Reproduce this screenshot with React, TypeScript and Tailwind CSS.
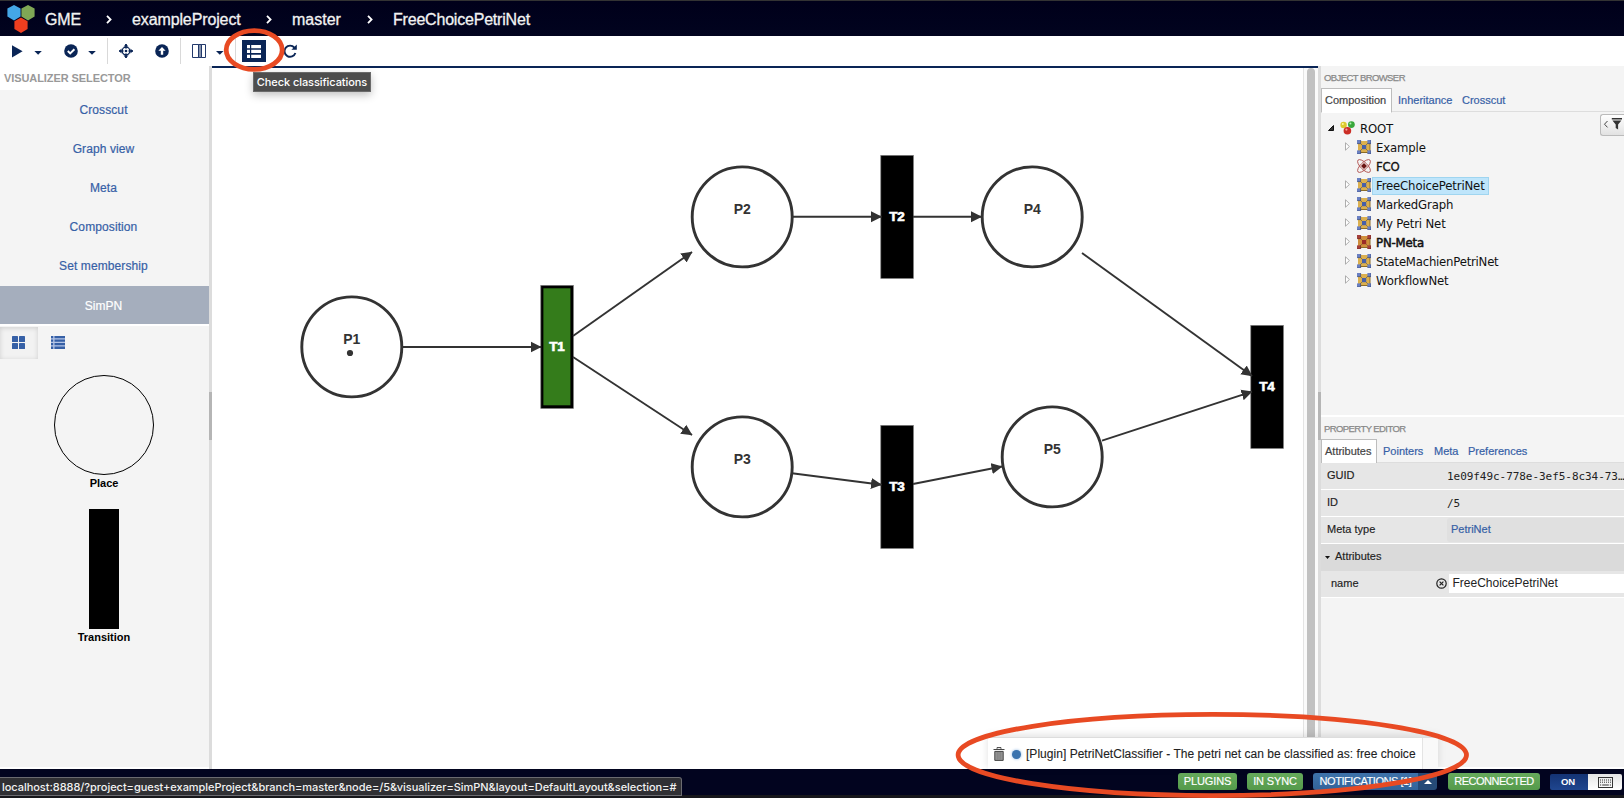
import React from "react";

const edges: [number, number, number, number][] = [
  [402, 347, 541, 347],
  [573, 336, 692, 252],
  [573, 357, 692, 435],
  [793, 216.8, 881.5, 216.8],
  [913, 216.8, 981.5, 216.8],
  [792, 473.3, 881.5, 484.8],
  [913, 484, 1002, 466.5],
  [1082, 253, 1252, 376],
  [1102, 440.7, 1252, 391.7],
];

const places = [
  { name: "P1", x: 351.8, y: 346.9 },
  { name: "P2", x: 742.2, y: 216.9 },
  { name: "P3", x: 742.2, y: 466.9 },
  { name: "P4", x: 1032.2, y: 216.9 },
  { name: "P5", x: 1052.2, y: 456.9 },
];

const transitions = [
  { name: "T1", x: 557, y: 346.7, enabled: true },
  { name: "T2", x: 897, y: 216.7, enabled: false },
  { name: "T3", x: 897, y: 486.7, enabled: false },
  { name: "T4", x: 1267, y: 386.7, enabled: false },
];

function Diagram() {
  return (
    <svg className="block h-[701px] w-[1091px]" viewBox="212 68 1091 701" fontFamily="Liberation Sans, Arial, sans-serif" fontWeight="bold" fontSize="14" textAnchor="middle">
      <defs>
        <marker id="arrow" viewBox="0 0 11 12" refX="10.5" refY="6" markerWidth="11" markerHeight="12" markerUnits="userSpaceOnUse" orient="auto">
          <path d="M0 0.5L11 6L0 11.5Z" fill="#333" />
        </marker>
      </defs>
      {places.map((p) => (
        <g key={p.name}>
          <circle cx={p.x} cy={p.y} r="50" fill="#fff" stroke="#333" strokeWidth="2.9" />
          <text x={p.x} y={p.y - 2.9} fill="#333">{p.name}</text>
        </g>
      ))}
      <circle cx="350" cy="353" r="3.1" fill="#333" />
      {transitions.map((t) => (
        <g key={t.name}>
          <rect x={t.x - 16.2} y={t.y - 61.3} width="32.6" height="123" fill="#000" stroke="#777" strokeWidth="0.7" />
          {t.enabled && <rect x={t.x - 13.6} y={t.y - 58.4} width="27" height="117" fill="#347c1b" />}
        </g>
      ))}
      {edges.map(([a, b, c, d], i) => (
        <line key={i} x1={a} y1={b} x2={c} y2={d} stroke="#333" strokeWidth="1.9" markerEnd="url(#arrow)" />
      ))}
      {transitions.map((t) => (
        <text key={t.name} x={t.x - 0.2} y={t.y + 4.3} fill="#fff" stroke="#fff" strokeWidth="0.6" fontSize="13.5" letterSpacing="-0.3">{t.name}</text>
      ))}
    </svg>
  );
}

function Logo() {
  return (
    <svg className="h-7 w-[28px]" viewBox="0 0 28 28">
      <path d="M7 0L13.6 3.6V11.6L7 15.4L0.4 11.6V3.6Z" fill="#44a6e6" />
      <path d="M21 0L27.6 3.6V11.6L21 15.4L14.4 11.6V3.6Z" fill="#7fa755" />
      <path d="M14 12.4L20.6 16.2V24L14 28L7.4 24V16.2Z" fill="#ee3e1f" />
    </svg>
  );
}

function Crumb({ children, className }: { children: string; className: string }) {
  return <span className={`pt-[2px] whitespace-nowrap text-[16px] text-[#f2f2f2] [-webkit-text-stroke:0.3px_#f2f2f2] ${className}`}>{children}</span>;
}

function Chevron({ className }: { className: string }) {
  return (
    <svg className={`mt-[2px] h-[9px] w-[6px] ${className}`} viewBox="0 0 6 9">
      <path d="M1 0.8L4.6 4.5L1 8.2" fill="none" stroke="#fff" strokeWidth="1.8" />
    </svg>
  );
}

function Toolbar() {
  return (
    <div className="h-[30px] w-full bg-white">
      <svg className="block h-[30px] w-[310px]" viewBox="0 36 310 30" fill="#0a2556">
        <path d="M12 45.2L22.6 51.3L12 57.4Z" />
        <path d="M34.4 51H41.8L38.1 54.8Z" />
        <circle cx="71" cy="51" r="6.8" />
        <path d="M67.8 51L70.2 53.4L74.4 49.2" fill="none" stroke="#fff" strokeWidth="2" />
        <path d="M88.2 51H95.8L92 54.8Z" />
        <path d="M107.5 38V64M180.5 38V64M235.5 38V64" stroke="#d9d9d9" fill="none" />
        <g>
          <circle cx="126" cy="51" r="3.8" fill="none" stroke="#0a2556" strokeWidth="1.3" />
          <circle cx="126" cy="51" r="1.3" />
          <path d="M126 44V48.5M126 53.5V58M119 51H123.5M128.5 51H133" stroke="#0a2556" strokeWidth="1.7" />
          <path d="M123.5 46.5L126 44L128.5 46.5ZM123.5 55.5L126 58L128.5 55.5ZM121.5 48.5L119 51L121.5 53.5ZM130.5 48.5L133 51L130.5 53.5Z" />
        </g>
        <circle cx="162" cy="51" r="6.8" />
        <path d="M162 47L165.6 50.8H163.2V54.8H160.8V50.8H158.4Z" fill="#fff" />
        <rect x="198" y="45" width="4" height="12.5" fill="#8794ad" />
        <path d="M192.5 44.5H198.5V57.5H192.5ZM201.5 44.5H205.5V57.5H201.5ZM198.5 44.5H201.5V57.5H198.5Z" fill="none" stroke="#22396b" strokeWidth="1" />
        <path d="M216 51H223.6L219.8 54.8Z" />
        <rect x="242" y="40" width="24" height="22" />
        <path d="M247 45H250V48.2H247ZM251.2 45H261V48.2H251.2ZM247 49.8H250V53.1H247ZM251.2 49.8H261V53.1H251.2ZM247 54.7H250V58H247ZM251.2 54.7H261V58H251.2Z" fill="#fff" />
        <path d="M294.4 47.6A5.6 5.6 0 1 0 295.4 53" fill="none" stroke="#0a2556" strokeWidth="1.9" />
        <path d="M296.8 44.6V49.8H291.4Z" />
      </svg>
    </div>
  );
}

function VisualizerItem({ children }: { children: string }) {
  return <div className="flex h-[39px] items-center justify-center pr-[2px] text-[12px] tracking-[0.1px] text-[#3660a6] [-webkit-text-stroke:0.2px_#3660a6]">{children}</div>;
}

function Splitter() {
  return (
    <div className="h-full w-[3px] shrink-0 bg-[#dcdcdc] pt-[326px]">
      <div className="h-12 bg-[#b5b5b5]" />
    </div>
  );
}

function LeftPanel() {
  return (
    <aside className="flex h-[701px] w-[209px] shrink-0 flex-col bg-[#f4f4f4]">
      <div className="flex h-6 items-center bg-white pl-1 text-[11px] font-bold tracking-[-0.08px] text-[#999]">VISUALIZER SELECTOR</div>
      {["Crosscut", "Graph view", "Meta", "Composition", "Set membership"].map((v) => (
        <VisualizerItem key={v}>{v}</VisualizerItem>
      ))}
      <div className="mt-px flex h-[38px] items-center justify-center bg-[#a5aebd] pt-px pr-[2px] text-[12px] text-white [-webkit-text-stroke:0.2px_#fff]">SimPN</div>
      <div className="h-[2px] bg-white" />
      <div className="mt-px flex h-8">
        <div className="flex h-8 w-[38px] items-center justify-center bg-[#f2f2f2] pr-[2px] pb-px shadow-[inset_0_1px_5px_rgba(0,0,0,0.15)]">
          <svg className="h-[13px] w-[13px]" viewBox="0 0 13 13" fill="#3660a6">
            <rect width="6" height="6" rx="0.6" /><rect x="7" width="6" height="6" rx="0.6" />
            <rect y="7" width="6" height="6" rx="0.6" /><rect x="7" y="7" width="6" height="6" rx="0.6" />
          </svg>
        </div>
        <svg className="mt-[9px] ml-[13px] h-[13px] w-[14px]" viewBox="0 0 14 13" fill="#3660a6">
          <rect width="14" height="13" fill="#b5c5e6" />
          <path d="M0 0H2.2V2.3H0ZM3.5 0H14V2.3H3.5ZM0 3.6H2.2V5.7H0ZM3.5 3.6H14V5.7H3.5ZM0 7.1H2.2V9.2H0ZM3.5 7.1H14V9.2H3.5ZM0 10.6H2.2V13H0ZM3.5 10.6H14V13H3.5Z" />
        </svg>
      </div>
      <div className="mt-[16px] flex flex-col items-center pr-px text-[11px] leading-[16px] font-bold text-black">
        <div className="h-[100px] w-[100px] rounded-full border border-black" />
        <div>Place</div>
        <div className="mt-[18px] h-[120px] w-[30px] bg-black" />
        <div>Transition</div>
      </div>
    </aside>
  );
}

function PanelTitle({ children }: { children: string }) {
  return <div className="flex h-[22px] shrink-0 items-center pt-[2px] pl-[3px] text-[9.5px] tracking-[-0.58px] text-[#888] [-webkit-text-stroke:0.25px_#888]">{children}</div>;
}

function Tab({ children, className, active }: { children: string; className: string; active?: boolean }) {
  return (
    <div className={`flex h-[25px] items-center whitespace-nowrap border text-[11px] ${active ? "border-[#bdbdbd] border-b-white bg-white text-[#444]" : "border-transparent text-[#3660a6]"} [-webkit-text-stroke:0.2px] ${className}`}>
      {children}
    </div>
  );
}

function ModelIcon({ meta }: { meta?: boolean }) {
  const c = meta ? "#a5403c" : "#6a80c2";
  return (
    <svg className="-mt-px h-[14px] w-[14px] shrink-0" viewBox="0 0 14 14">
      <rect x="1" y="1" width="12" height="12" fill={meta ? "#d08f3c" : "#dcb04e"} />
      <path d="M1 12.5H13V3" fill="none" stroke="#8c6c28" />
      <path d="M2 2L12 12M12 2L2 12" stroke="#8c7238" strokeWidth="0.9" />
      <rect x="0" y="0" width="3.6" height="3.6" fill={c} /><rect x="10.4" y="0" width="3.6" height="3.6" fill={c} />
      <rect x="0" y="10.4" width="3.6" height="3.6" fill={c} /><rect x="10.4" y="10.4" width="3.6" height="3.6" fill={c} />
      <path d="M0 3.6H3.6V0M10.4 3.6H14V0M0 14H3.6V10.4M10.4 14H14V10.4" fill="none" stroke={meta ? "#6b1c1a" : "#34477f"} strokeWidth="0.7" />
      <rect x="5" y="5" width="4.2" height="4.2" fill={meta ? "#9b2c27" : "#4760a8"} />
    </svg>
  );
}

function FcoIcon() {
  return (
    <svg className="-mt-px h-[14px] w-[14px] shrink-0" viewBox="0 0 14 14">
      <g fill="none" stroke="#b0504e" strokeWidth="0.9">
        <ellipse cx="7" cy="7" rx="8.4" ry="3.4" transform="rotate(45 7 7)" />
        <ellipse cx="7" cy="7" rx="8.4" ry="3.4" transform="rotate(-45 7 7)" />
      </g>
      <path d="M7 4L10 7L7 10L4 7Z" fill="#6d1715" />
    </svg>
  );
}

const nodes = ["Example", "FCO", "FreeChoicePetriNet", "MarkedGraph", "My Petri Net", "PN-Meta", "StateMachienPetriNet", "WorkflowNet"];

function Tree() {
  return (
    <div className="flex grow pt-[7px] font-['DejaVu_Sans_Condensed','DejaVu_Sans','Noto_Sans',sans-serif] text-[13px] text-[#111] [font-stretch:condensed]">
      <div className="w-[279px]">
        <div className="flex h-[19px] items-center pl-[7px]">
          <svg className="-mt-[2px] h-[6px] w-[6px]" viewBox="0 0 6 6"><path d="M5.5 0.5V5.5H0.5Z" fill="#333" stroke="#111" /></svg>
          <svg className="-mt-[2px] ml-[6px] h-[14px] w-[15px]" viewBox="0 0 15 14">
            <circle cx="3.6" cy="4" r="3.2" fill="#dccb2e" /><circle cx="11.4" cy="3.6" r="3.4" fill="#3aa83c" /><circle cx="7.4" cy="9.8" r="3.8" fill="#cb2d25" />
            <circle cx="2.8" cy="3" r="1" fill="#fff8a8" /><circle cx="10.4" cy="2.6" r="1" fill="#b3efb3" /><circle cx="6.4" cy="8.6" r="1.1" fill="#f5a59f" />
          </svg>
          <span className="ml-[5px] tracking-[-0.2px]">ROOT</span>
        </div>
        {nodes.map((n) => (
          <div key={n} className="flex h-[19px] items-center pl-6">
            <svg className="-mt-[2px] mr-[7px] h-[9px] w-[5px] shrink-0" viewBox="0 0 5 9">
              {n !== "FCO" && <path d="M0.5 0.8L4.4 4.5L0.5 8.2Z" fill="#fff" stroke="#999" strokeWidth="0.8" />}
            </svg>
            {n === "FCO" ? <FcoIcon /> : <ModelIcon meta={n === "PN-Meta"} />}
            <span
              className={`ml-px flex h-[18px] items-center border px-[3px] whitespace-nowrap ${n === "StateMachienPetriNet" ? "tracking-[-0.22px]" : "tracking-[-0.15px]"} ${n === "FreeChoicePetriNet" ? "border-[#9fd5f0] bg-[#bee5fb]" : "border-transparent"} ${n === "PN-Meta" ? "[-webkit-text-stroke:0.5px_#111]" : n === "FCO" ? "[-webkit-text-stroke:0.3px_#111]" : ""}`}
            >
              {n}
            </span>
          </div>
        ))}
      </div>
      <div className="-mt-[5px] flex h-[22px] w-6 items-center rounded-l-[3px] border border-r-0 border-[#bbb] bg-linear-to-b from-white to-[#e2e2e2] pb-[2px]">
        <svg className="h-[14px] w-[22px]" viewBox="0 0 22 14">
          <path d="M6.5 4L3.5 7.2L6.5 10.4" fill="none" stroke="#444" />
          <path d="M10.8 1H21V2.4H10.8ZM11.4 3.4H20.4L17.1 7.6V12.6L14.7 11V7.6Z" fill="#333" />
        </svg>
      </div>
    </div>
  );
}

function Row({ label, children }: { label: string; children: React.ReactNode }) {
  return (
    <div className="flex h-[27px] items-center border-b border-white bg-[#e6e6e6] text-[11px] text-[#222]">
      <div className="w-[126px] shrink-0 pb-px pl-[6px] [-webkit-text-stroke:0.15px]">{label}</div>
      {children}
    </div>
  );
}

function RightPanel() {
  return (
    <aside className="flex h-[701px] w-[303px] shrink-0 flex-col overflow-hidden bg-[#f4f4f4]">
      <div className="flex h-[349px] flex-col">
        <PanelTitle>OBJECT BROWSER</PanelTitle>
        <div className="flex h-6 border-b border-[#ddd]">
          <Tab active className="w-[71px] pl-[3px]">Composition</Tab>
          <Tab className="w-[64px] pl-[5px]">Inheritance</Tab>
          <Tab className="pl-[5px]">Crosscut</Tab>
        </div>
        <Tree />
      </div>
      <div className="h-[2px] shrink-0 bg-white" />
      <PanelTitle>PROPERTY EDITOR</PanelTitle>
      <div className="flex h-6 border-b border-[#ddd]">
        <Tab active className="w-[56px] pl-[3px]">Attributes</Tab>
        <Tab className="w-[51px] pl-[5px]">Pointers</Tab>
        <Tab className="w-[35px] pl-[5px]">Meta</Tab>
        <Tab className="pl-1">Preferences</Tab>
      </div>
      <Row label="GUID"><span className="pt-[2px] font-['DejaVu_Sans_Mono',monospace] text-[11px] tracking-[-0.05px] whitespace-nowrap">1e09f49c-778e-3ef5-8c34-73…</span></Row>
      <Row label="ID"><span className="pt-[2px] font-['DejaVu_Sans_Mono',monospace] text-[11px]">/5</span></Row>
      <Row label="Meta type"><span className="flex h-6 grow items-center rounded-l-[3px] bg-[#e0e0e0] pb-px pl-1 text-[#3660a6] [-webkit-text-stroke:0.2px]">PetriNet</span></Row>
      <div className="flex h-[27px] items-center bg-[#dadada] pb-[2px] pl-1 text-[11px] text-[#222] [-webkit-text-stroke:0.15px]">
        <svg className="mt-[2px] h-[3px] w-[5px]" viewBox="0 0 5 3"><path d="M0 0H5L2.5 3Z" fill="#111" /></svg>
        <span className="ml-[5px]">Attributes</span>
      </div>
      <div className="flex h-[27px] items-center border-b border-white bg-[#e6e6e6] pb-px text-[11px] text-[#222]">
        <span className="w-[115px] pl-[10px] [-webkit-text-stroke:0.15px]">name</span>
        <svg className="-mt-px h-[11px] w-[11px]" viewBox="0 0 11 11" fill="none" stroke="#222">
          <circle cx="5.5" cy="5.5" r="4.7" strokeWidth="1.2" /><path d="M3.6 3.6L7.4 7.4M7.4 3.6L3.6 7.4" strokeWidth="1.2" />
        </svg>
        <span className="ml-[2px] flex h-[19px] grow items-center bg-white pb-px pl-[3.5px] text-[12px]">FreeChoicePetriNet</span>
      </div>
    </aside>
  );
}

function Badge({ children, className }: { children: string; className: string }) {
  return <div className={`flex h-[17px] items-center justify-center rounded-[3px] text-[11px] whitespace-nowrap text-white [-webkit-text-stroke:0.15px_#fff] ${className}`}>{children}</div>;
}

export default function App() {
  return (
    <div className="relative flex h-[798px] w-[1624px] flex-col overflow-hidden bg-white font-['Liberation_Sans',Arial,sans-serif]">
      <header className="flex h-9 items-center border-t border-[#333] bg-linear-to-b from-[#00001a] to-[#02041f] pl-[7px]">
        <Logo />
        <Crumb className="ml-[10px] w-[61px] tracking-[-0.1px]">GME</Crumb>
        <Chevron className="mr-[20px]" />
        <Crumb className="w-[134px] tracking-[-0.12px]">exampleProject</Crumb>
        <Chevron className="mr-[20px]" />
        <Crumb className="w-[75px]">master</Crumb>
        <Chevron className="mr-[20px]" />
        <Crumb className="tracking-[-0.2px]">FreeChoicePetriNet</Crumb>
      </header>
      <Toolbar />
      <div className="flex h-[703px]">
        <LeftPanel />
        <Splitter />
        <main className="h-[703px] w-[1106px] border-t-2 border-[#0a2556]">
          <div className="flex h-[701px]">
            <Diagram />
            <div className="w-[4px] border-l border-[#e4e4e4] bg-[#fafafa]" />
            <div className="w-[8px] rounded-t bg-[#c1c1c1]" />
            <div className="w-[3px] bg-[#fafafa]" />
          </div>
        </main>
        <Splitter />
        <RightPanel />
      </div>
      <footer className="flex h-[26px] items-center justify-end bg-[#02041f] pr-[2px] pb-px">
        <Badge className="w-[59px] bg-linear-to-b from-[#66aa5c] to-[#559a4b] tracking-[-0.1px]">PLUGINS</Badge>
        <Badge className="ml-[10px] w-[56px] bg-linear-to-b from-[#66aa5c] to-[#559a4b] tracking-[-0.15px]">IN SYNC</Badge>
        <Badge className="ml-[10px] w-[105px] rounded-r-none bg-linear-to-b from-[#3f73ab] to-[#32639a] tracking-[-0.45px]">NOTIFICATIONS [1]</Badge>
        <div className="flex h-[17px] w-[19px] items-center justify-center rounded-r-[3px] bg-[#264a77]">
          <svg className="h-1 w-2" viewBox="0 0 8 4"><path d="M0 4L4 0L8 4Z" fill="#fff" /></svg>
        </div>
        <Badge className="ml-[11px] w-[92px] bg-linear-to-b from-[#66aa5c] to-[#559a4b] tracking-[-0.5px]">RECONNECTED</Badge>
        <div className="mt-px ml-[10px] flex h-4 w-[38px] items-center justify-center rounded-l-[2px] bg-linear-to-b from-[#143374] to-[#1f468f] pr-[2px] text-[9.5px] font-bold text-white">ON</div>
        <div className="mt-px flex h-4 w-[34px] items-center justify-center rounded-r-[2px] bg-linear-to-b from-[#e4e4e4] to-white">
          <svg className="h-[11px] w-[15px]" viewBox="0 0 15 11" fill="none" stroke="#333">
            <rect x="0.5" y="0.5" width="14" height="10" /><path d="M2 3H13M2 5.2H13" strokeDasharray="1 1" /><path d="M2 8H3.2M4.2 8H10.8M11.8 8H13" />
          </svg>
        </div>
      </footer>
      <div className="h-[3px] bg-[#17171b]" />

      <div className="absolute top-[72px] left-[253px] flex h-5 w-[118px] items-center justify-center border border-[#6a6a6a] bg-[#4d4d4d] font-[Inter,sans-serif] text-[11px] font-medium tracking-[-0.07px] whitespace-nowrap text-white shadow-[0_3px_8px_rgba(0,0,0,0.25)]">Check classifications</div>

      <div className="absolute top-[737px] left-[988px] flex h-8 w-[450px] items-center border-t border-[#ddd] bg-[#f9f9f9] shadow-[0_-2px_8px_rgba(0,0,0,0.12)]">
        <div className="flex h-full w-[435px] items-center border-r border-[#e4e4e4] bg-white pl-[5px]">
          <svg className="h-[14px] w-[12px]" viewBox="0 0 12 14" fill="none" stroke="#444">
            <path d="M4 1.8V0.6H8V1.8M0.5 2.5H11.5" /><path d="M1.8 4.4V13.4H10.2V4.4Z" fill="#999" /><path d="M4.2 5V12.6M6 5V12.6M7.8 5V12.6" stroke="#777" strokeWidth="0.8" />
          </svg>
          <div className="mt-[2px] ml-[7px] h-[9px] w-[9px] rounded-full bg-[#3b73ae] shadow-[0_0_3px_#8ab4e0]" />
          <span className="ml-[5px] text-[12px] tracking-[0.03px] whitespace-nowrap text-[#222] [-webkit-text-stroke:0.1px]">[Plugin] PetriNetClassifier - The petri net can be classified as: free choice</span>
        </div>
      </div>

      <div className="absolute top-[777px] left-0 flex h-[19px] w-[682px] items-center rounded-tr-[3px] border border-l-0 border-[#6b6b70] bg-[#303034] pt-px pl-[2px] font-[Inter,sans-serif] text-[11px] font-medium tracking-[-0.04px] whitespace-nowrap text-[#f2f2f2]">
        localhost:8888/?project=guest+exampleProject&amp;branch=master&amp;node=/5&amp;visualizer=SimPN&amp;layout=DefaultLayout&amp;selection=#
      </div>

      <svg className="pointer-events-none absolute inset-0 h-[798px] w-[1624px]" viewBox="0 0 1624 798" fill="none" stroke="#e84a23" strokeWidth="4.8">
        <ellipse cx="254.2" cy="50" rx="28" ry="19.4" />
        <ellipse cx="1212.3" cy="755" rx="254.2" ry="40.6" strokeWidth="4.8" />
      </svg>
    </div>
  );
}
